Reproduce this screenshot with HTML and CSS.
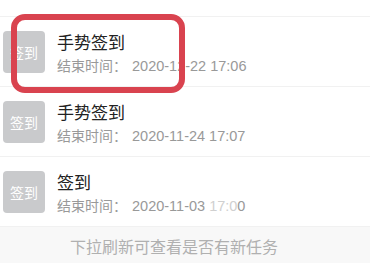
FILE: index.html
```html
<!DOCTYPE html>
<html lang="zh-CN">
<head>
<meta charset="utf-8">
<title>任务列表</title>
<link rel="stylesheet" href="styles.css">
</head>
<body>
<div class="page">
  <div class="top-gap"></div>
  <ul class="task-list">
    <li class="task">
      <div class="badge">签到</div>
      <div class="info">
        <div class="title">手势签到</div>
        <div class="meta">结束时间：<span class="time">2020-12-22 17:06</span></div>
      </div>
    </li>
    <li class="task">
      <div class="badge">签到</div>
      <div class="info">
        <div class="title">手势签到</div>
        <div class="meta">结束时间：<span class="time">2020-11-24 17:07</span></div>
      </div>
    </li>
    <li class="task">
      <div class="badge">签到</div>
      <div class="info">
        <div class="title">签到</div>
        <div class="meta">结束时间：<span class="time">2020-11-03 <span class="faded">17:0</span>0</span></div>
      </div>
    </li>
  </ul>
  <div class="footer">下拉刷新可查看是否有新任务</div>
  <div class="highlight"></div>
</div>
</body>
</html>
```

FILE: styles.css
```css
* { box-sizing: border-box; }
html, body {
  margin: 0;
  padding: 0;
  background: #ffffff;
}
body {
  font-family: "Liberation Sans", "Noto Sans CJK SC", sans-serif;
}
.page {
  position: relative;
  width: 370px;
  height: 263px;
  overflow: hidden;
  background: #ffffff;
}
.top-gap {
  height: 17px;
  border-bottom: 1px solid #f1f1f1;
}
.task-list {
  list-style: none;
  margin: 0;
  padding: 0;
}
.task {
  display: flex;
  align-items: flex-start;
  gap: 12px;
  height: 70px;
  padding: 14px 0 0 3px;
  border-bottom: 1px solid #f1f1f1;
}
.badge {
  flex: none;
  width: 42px;
  height: 42px;
  border-radius: 4px;
  background: #c9cacc;
  color: #ffffff;
  font-size: 14px;
  display: flex;
  align-items: center;
  justify-content: center;
}
.info {
  padding-top: 2px;
  display: flex;
  flex-direction: column;
}
.title {
  font-size: 17px;
  line-height: 22px;
  color: #222222;
}
.meta {
  margin-top: 2px;
  font-size: 14px;
  line-height: 18px;
  color: #999999;
}
.time {
  margin-left: 5px;
  font-size: 14.5px;
}
.faded {
  color: #d0d0d0;
}
.footer {
  height: 60px;
  padding: 10px 22px 0 0;
  background: #f8f8f8;
  text-align: center;
  font-size: 16px;
  line-height: 22px;
  color: #b0b0b0;
}
.highlight {
  position: absolute;
  left: 11px;
  top: 14px;
  width: 174px;
  height: 79px;
  border: 6px solid #d9434f;
  border-radius: 14px;
}
```
